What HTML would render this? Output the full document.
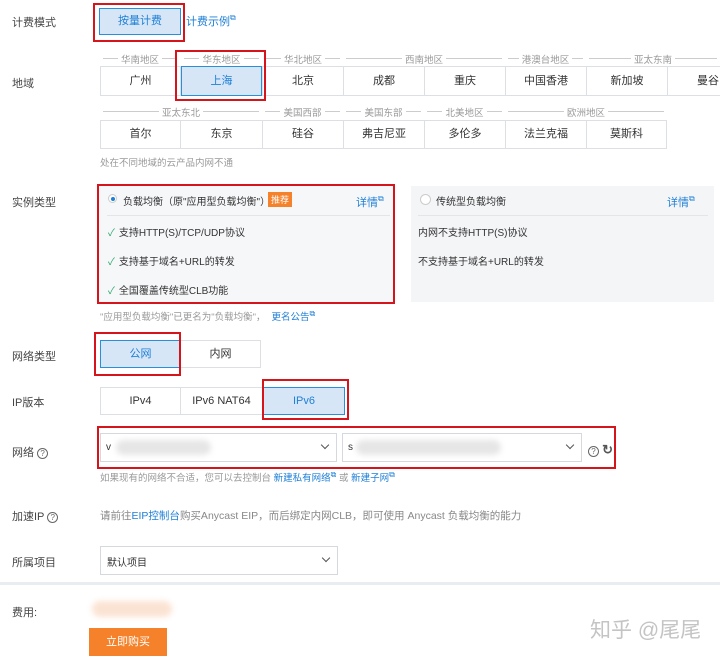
<!DOCTYPE html>
<html><head><meta charset="utf-8"><style>
*{margin:0;padding:0;box-sizing:border-box}
body{width:720px;height:658px;background:#fff;position:relative;overflow:hidden;font-family:"Liberation Sans","Noto Sans CJK SC",sans-serif;font-size:11px;color:#333}
.a{position:absolute}
.lbl{position:absolute;left:12px;font-size:11px;color:#444}
.btn{position:absolute;border:1px solid #dcdfe4;background:#fff;text-align:center;font-size:11px;color:#333}
.sel{background:#d6e6f7;border:1px solid #2a8fdb;color:#1e7fd6;z-index:2}
.red{position:absolute;border:2px solid #d6141c;z-index:5}
.hd{position:absolute;font-size:9.5px;color:#999;text-align:center;height:12px}
.hd span{background:#fff;padding:0 3px;position:relative}
.hd:before{content:"";position:absolute;left:3px;right:3px;top:6px;border-top:1px solid #ccc}
.link{color:#1e7fd6}
.grey{color:#999;font-size:9.5px}
.ext{font-size:8px;vertical-align:top}
.chk{color:#2aa56a;margin-right:4px}
.selbox{position:absolute;border:1px solid #d5d8dd;background:#fff}
.arr{position:absolute;right:8px;top:8px;width:6px;height:6px;border-right:1.3px solid #555;border-bottom:1.3px solid #555;transform:rotate(45deg)}
.blur{position:absolute;background:#e6e6e6;border-radius:8px;filter:blur(3px)}
.q{display:inline-block;width:11px;height:11px;border:1px solid #666;border-radius:50%;font-size:8px;text-align:center;line-height:9px;color:#666;vertical-align:middle}
</style></head><body>

<div class="lbl" style="top:14px">计费模式</div>
<div class="btn sel" style="left:99px;top:8px;width:82px;height:27px;line-height:25px">按量计费</div>
<div class="red" style="left:93px;top:3px;width:92px;height:39px"></div>
<div class="a link" style="left:186px;top:13px">计费示例<span class="ext">⧉</span></div>

<div class="lbl" style="top:75px">地域</div>
<div class="hd" style="left:100px;top:52px;width:80px"><span>华南地区</span></div>
<div class="hd" style="left:181px;top:52px;width:81px"><span>华东地区</span></div>
<div class="hd" style="left:263px;top:52px;width:80px"><span>华北地区</span></div>
<div class="hd" style="left:343px;top:52px;width:162px"><span>西南地区</span></div>
<div class="hd" style="left:505px;top:52px;width:81px"><span>港澳台地区</span></div>
<div class="hd" style="left:586px;top:52px;width:134px"><span>亚太东南</span></div>

<div class="btn" style="left:100px;top:66px;width:81px;height:30px;line-height:28px">广州</div>
<div class="btn sel" style="left:181px;top:66px;width:81px;height:30px;line-height:28px">上海</div>
<div class="btn" style="left:262px;top:66px;width:82px;height:30px;line-height:28px">北京</div>
<div class="btn" style="left:343px;top:66px;width:82px;height:30px;line-height:28px">成都</div>
<div class="btn" style="left:424px;top:66px;width:82px;height:30px;line-height:28px">重庆</div>
<div class="btn" style="left:505px;top:66px;width:82px;height:30px;line-height:28px">中国香港</div>
<div class="btn" style="left:586px;top:66px;width:82px;height:30px;line-height:28px">新加坡</div>
<div class="btn" style="left:667px;top:66px;width:82px;height:30px;line-height:28px">曼谷</div>
<div class="red" style="left:175px;top:50px;width:91px;height:51px"></div>

<div class="hd" style="left:100px;top:105px;width:162px"><span>亚太东北</span></div>
<div class="hd" style="left:262px;top:105px;width:81px"><span>美国西部</span></div>
<div class="hd" style="left:343px;top:105px;width:81px"><span>美国东部</span></div>
<div class="hd" style="left:424px;top:105px;width:81px"><span>北美地区</span></div>
<div class="hd" style="left:505px;top:105px;width:162px"><span>欧洲地区</span></div>
<div class="btn" style="left:100px;top:120px;width:81px;height:29px;line-height:27px">首尔</div>
<div class="btn" style="left:180px;top:120px;width:83px;height:29px;line-height:27px">东京</div>
<div class="btn" style="left:262px;top:120px;width:82px;height:29px;line-height:27px">硅谷</div>
<div class="btn" style="left:343px;top:120px;width:82px;height:29px;line-height:27px">弗吉尼亚</div>
<div class="btn" style="left:424px;top:120px;width:82px;height:29px;line-height:27px">多伦多</div>
<div class="btn" style="left:505px;top:120px;width:82px;height:29px;line-height:27px">法兰克福</div>
<div class="btn" style="left:586px;top:120px;width:81px;height:29px;line-height:27px">莫斯科</div>
<div class="a grey" style="left:100px;top:155px">处在不同地域的云产品内网不通</div>

<div class="lbl" style="top:194px">实例类型</div>
<div class="a" style="left:99px;top:186px;width:294px;height:116px;background:#f6f7f9"></div>
<div class="red" style="left:97px;top:184px;width:298px;height:120px"></div>
<div class="a" style="left:108px;top:194px;width:9px;height:9px;border-radius:50%;background:#fff;border:1px solid #ccc"><div style="margin:1.5px;width:4px;height:4px;border-radius:50%;background:#1e7fd6"></div></div>
<div class="a" style="left:123px;top:193px;font-size:10px">负载均衡（原"应用型负载均衡"）</div>
<div class="a" style="left:268px;top:192px;background:#f5822b;color:#fff;font-size:9px;padding:1px 3px">推荐</div>
<div class="a link" style="left:356px;top:194px;font-size:11px">详情<span class="ext">⧉</span></div>
<div class="a" style="left:107px;top:215px;width:283px;border-top:1px solid #e3e5e8"></div>
<div class="a" style="left:108px;top:224px;font-size:10px"><span class="chk">✓</span>支持HTTP(S)/TCP/UDP协议</div>
<div class="a" style="left:108px;top:253px;font-size:10px"><span class="chk">✓</span>支持基于域名+URL的转发</div>
<div class="a" style="left:108px;top:282px;font-size:10px"><span class="chk">✓</span>全国覆盖传统型CLB功能</div>

<div class="a" style="left:411px;top:186px;width:303px;height:116px;background:#f4f5f7"></div>
<div class="a" style="left:420px;top:194px;width:11px;height:11px;border-radius:50%;background:#fff;border:1px solid #ccc"></div>
<div class="a" style="left:436px;top:193px;font-size:10px">传统型负载均衡</div>
<div class="a link" style="left:667px;top:194px;font-size:11px">详情<span class="ext">⧉</span></div>
<div class="a" style="left:418px;top:215px;width:290px;border-top:1px solid #e3e5e8"></div>
<div class="a" style="left:418px;top:224px;font-size:10px">内网不支持HTTP(S)协议</div>
<div class="a" style="left:418px;top:253px;font-size:10px">不支持基于域名+URL的转发</div>
<div class="a grey" style="left:100px;top:309px">"应用型负载均衡"已更名为"负载均衡"，<span class="link" style="margin-left:6px">更名公告<span class="ext">⧉</span></span></div>

<div class="lbl" style="top:348px">网络类型</div>
<div class="btn sel" style="left:100px;top:340px;width:81px;height:28px;line-height:26px">公网</div>
<div class="btn" style="left:180px;top:340px;width:81px;height:28px;line-height:26px">内网</div>
<div class="red" style="left:94px;top:332px;width:87px;height:44px"></div>

<div class="lbl" style="top:394px">IP版本</div>
<div class="btn" style="left:100px;top:387px;width:81px;height:28px;line-height:26px">IPv4</div>
<div class="btn" style="left:180px;top:387px;width:83px;height:28px;line-height:26px">IPv6 NAT64</div>
<div class="btn sel" style="left:263px;top:387px;width:82px;height:28px;line-height:26px">IPv6</div>
<div class="red" style="left:262px;top:379px;width:87px;height:41px"></div>

<div class="lbl" style="top:444px">网络 <span class="q">?</span></div>
<div class="selbox" style="left:100px;top:433px;width:237px;height:29px"><div class="arr"></div></div>
<div class="a" style="left:106px;top:442px;font-size:10px">v</div>
<div class="blur" style="left:116px;top:440px;width:95px;height:15px"></div>
<div class="selbox" style="left:342px;top:433px;width:240px;height:29px"><div class="arr"></div></div>
<div class="a" style="left:348px;top:442px;font-size:10px">s</div>
<div class="blur" style="left:356px;top:440px;width:145px;height:15px"></div>
<div class="a" style="left:588px;top:442px"><span class="q">?</span> <span style="font-size:13px;font-weight:bold;color:#555">↻</span></div>
<div class="red" style="left:97px;top:426px;width:519px;height:43px"></div>
<div class="a grey" style="left:100px;top:470px">如果现有的网络不合适，您可以去控制台 <span class="link">新建私有网络<span class="ext">⧉</span></span> 或 <span class="link">新建子网<span class="ext">⧉</span></span></div>

<div class="lbl" style="top:508px">加速IP <span class="q">?</span></div>
<div class="a" style="left:100px;top:508px;font-size:10.5px;color:#888">请前往<span class="link">EIP控制台</span>购买Anycast EIP，而后绑定内网CLB，即可使用 Anycast 负载均衡的能力</div>

<div class="lbl" style="top:554px">所属项目</div>
<div class="selbox" style="left:100px;top:546px;width:238px;height:29px"><div class="arr"></div></div>
<div class="a" style="left:107px;top:554px;font-size:10px">默认项目</div>

<div class="a" style="left:0;top:582px;width:720px;height:3px;background:#e8edf2"></div>

<div class="lbl" style="top:604px">费用:</div>
<div class="blur" style="left:92px;top:601px;width:80px;height:16px;background:#fbe3d3"></div>
<div class="a" style="left:89px;top:628px;width:78px;height:28px;background:#f5822b;color:#fff;text-align:center;line-height:28px;font-size:11px">立即购买</div>
<div class="a" style="left:590px;top:614px;font-size:21px;color:#c4c4c4">知乎 @尾尾</div>
</body></html>
